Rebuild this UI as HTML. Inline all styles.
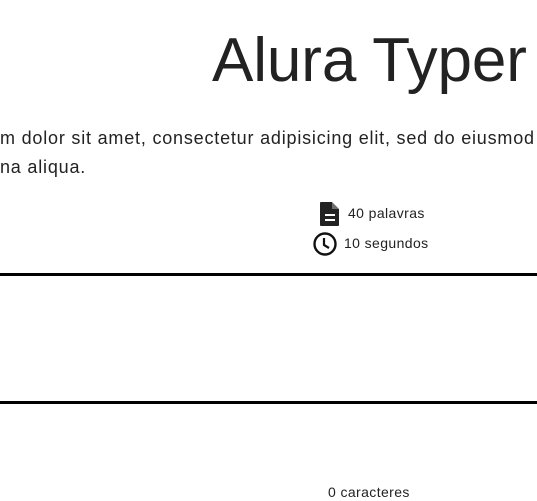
<!DOCTYPE html>
<html><head><style>
body{margin:0;width:537px;height:498px;overflow:hidden;background:#fff;font-family:"Liberation Sans",sans-serif;color:#222;position:relative}
.a{position:absolute;white-space:nowrap}
</style></head><body>
<div class="a" style="left:212px;top:24px;font-size:62px;line-height:74px;color:#222;letter-spacing:-0.1px">Alura Typer</div>
<div class="a" style="left:0;top:124px;font-size:18px;line-height:29px;letter-spacing:0.8px">m dolor sit amet, consectetur adipisicing elit, sed do eiusmod<br>na aliqua.</div>
<svg class="a" style="left:318px;top:201px" width="24" height="26" viewBox="0 0 24 26"><path d="M3 1h11l7 7v16a1 1 0 0 1-1 1H3a1 1 0 0 1-1-1V2a1 1 0 0 1 1-1z" fill="#222"/><path d="M14 1v7h7" fill="#fff" opacity=".35"/><rect x="7" y="13" width="10" height="2" fill="#fff"/><rect x="7" y="18" width="10" height="2" fill="#fff"/></svg>
<div class="a" style="left:348px;top:204px;font-size:14px;line-height:18px;letter-spacing:0.4px">40 palavras</div>
<svg class="a" style="left:312px;top:231px" width="26" height="26" viewBox="0 0 26 26"><circle cx="13" cy="13" r="10.5" fill="none" stroke="#111" stroke-width="2.4"/><path d="M12 7v7l5 3" fill="none" stroke="#111" stroke-width="2.2"/></svg>
<div class="a" style="left:344px;top:234px;font-size:14px;line-height:18px;letter-spacing:0.4px">10 segundos</div>
<div class="a" style="left:0;top:273px;width:537px;height:3px;background:#000"></div>
<div class="a" style="left:0;top:401px;width:537px;height:3px;background:#000"></div>
<div class="a" style="left:328px;top:483px;font-size:14px;line-height:18px;letter-spacing:0.4px">0 caracteres</div>
</body></html>
